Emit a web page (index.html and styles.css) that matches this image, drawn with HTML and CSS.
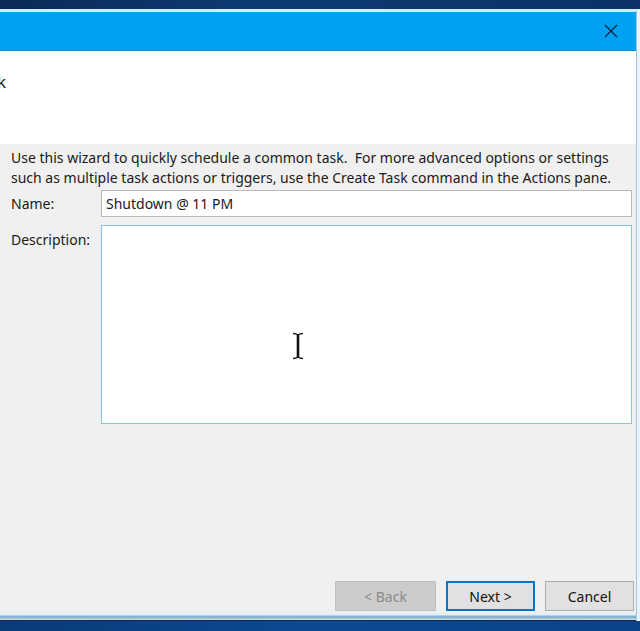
FILE: index.html
```html
<!DOCTYPE html>
<html>
<head>
<meta charset="utf-8">
<link rel="stylesheet" href="styles.css">
</head>
<body>
<div class="desktop-top"></div>
<div class="window">
  <div class="titlebar">
    <div class="close">
      <svg width="14" height="14" viewBox="0 0 14 14"><path d="M1 1 L13 13 M13 1 L1 13" stroke="#10243a" stroke-width="1.3" fill="none"/></svg>
    </div>
  </div>
  <div class="header">
    <div class="title"><span>Create a Basic Task</span></div>
  </div>
  <div class="content">
    <p class="intro">Use this wizard to quickly schedule a common task.&nbsp; For more advanced options or settings such as multiple task actions or triggers, use the Create Task command in the Actions pane.</p>
    <div class="form">
      <label class="lbl">Name:</label>
      <div class="input">Shutdown @ 11 PM</div>
      <label class="lbl lbl-desc">Description:</label>
      <div class="textarea">
        <svg class="ibeam" width="12" height="28" viewBox="0 0 12 28"><path d="M1 1.5 Q4 1.5 6 3 Q8 1.5 11 1.5 M6 3 V25 M1 26.5 Q4 26.5 6 25 Q8 26.5 11 26.5" stroke="#111" stroke-width="1.4" fill="none"/><path d="M6 3 V25" stroke="#111" stroke-width="2.6"/></svg>
      </div>
    </div>
    <div class="spacer"></div>
    <div class="buttons">
      <div class="btn btn-back">&lt; Back</div>
      <div class="btn btn-next">Next &gt;</div>
      <div class="btn btn-cancel">Cancel</div>
    </div>
  </div>
  <div class="bottom-border"></div>
</div>
<div class="desktop-bottom"></div>
</body>
</html>
```

FILE: styles.css
```css
html, body {
  margin: 0;
  padding: 0;
  width: 640px;
  height: 631px;
  overflow: hidden;
  background: #0b4486;
  font-family: "Noto Sans", "Open Sans", sans-serif;
}

.desktop-top {
  height: 9px;
  background: linear-gradient(90deg, #0a2a55 0%, #0d3a74 40%, #0a3266 100%);
}

.window {
  display: flex;
  flex-direction: column;
  height: 612px;
  width: 637px;
  box-sizing: border-box;
  border-top: 3px solid #d3ebf8;
  border-right: 1px solid #9cc6e2;
  box-shadow: 3px 0 0 #eaf4fb;
  background: #f0f0f0;
}

.titlebar {
  height: 38px;
  background: #00a1f3;
  border-bottom: 1px solid #0a8ad2;
  display: flex;
  justify-content: flex-end;
  align-items: center;
}

.close {
  width: 42px;
  display: flex;
  justify-content: center;
  align-items: center;
  padding-right: 4px;
}

.header {
  height: 93px;
  background: #ffffff;
  display: flex;
  align-items: flex-start;
}

.title {
  width: 6px;
  display: flex;
  justify-content: flex-end;
  white-space: nowrap;
  margin-top: 19px;
  font-size: 17px;
  color: #1e1e1e;
}

.content {
  flex: 1;
  display: flex;
  flex-direction: column;
  padding: 4px 2px 0 11px;
  color: #1a1a1a;
  font-size: 14px;
}

.intro {
  margin: 0;
  line-height: 19.5px;
  width: 605px;
}

.form {
  display: grid;
  grid-template-columns: 90px 1fr;
  row-gap: 8px;
  margin-top: 3px;
  margin-right: 2px;
}

.lbl {
  line-height: 27px;
}

.lbl-desc {
  line-height: 30px;
}

.input {
  height: 27px;
  box-sizing: border-box;
  border: 1px solid #b9b9b9;
  background: #ffffff;
  padding: 0 4px;
  line-height: 25px;
}

.textarea {
  height: 199px;
  box-sizing: border-box;
  border: 1px solid #86c3e8;
  background: #ffffff;
  position: relative;
}

.ibeam {
  position: absolute;
  left: 190px;
  top: 106px;
}

.spacer {
  flex: 1;
}

.buttons {
  display: flex;
  justify-content: flex-end;
  gap: 10px;
  margin-bottom: 2px;
}

.btn {
  height: 30px;
  box-sizing: border-box;
  display: flex;
  align-items: center;
  justify-content: center;
  font-size: 14px;
  background: #e1e1e1;
  border: 1px solid #adadad;
  color: #111;
}

.btn-back {
  width: 101px;
  background: #cccccc;
  border-color: #bfbfbf;
  color: #8a8a8a;
}

.btn-next {
  width: 89px;
  border: 2px solid #0a74c8;
}

.btn-cancel {
  width: 89px;
}

.bottom-border {
  height: 8px;
  background: linear-gradient(180deg, #dff0f8 0px, #dff0f8 2px, #8ab4cc 3px, #8ab4cc 5px, #c8dce8 6px, #c8dce8 7px, #10284a 7px);
}

.desktop-bottom {
  height: 10px;
  background: linear-gradient(90deg, #0a3a78 0%, #0b4a92 50%, #0a4288 100%);
}
```
